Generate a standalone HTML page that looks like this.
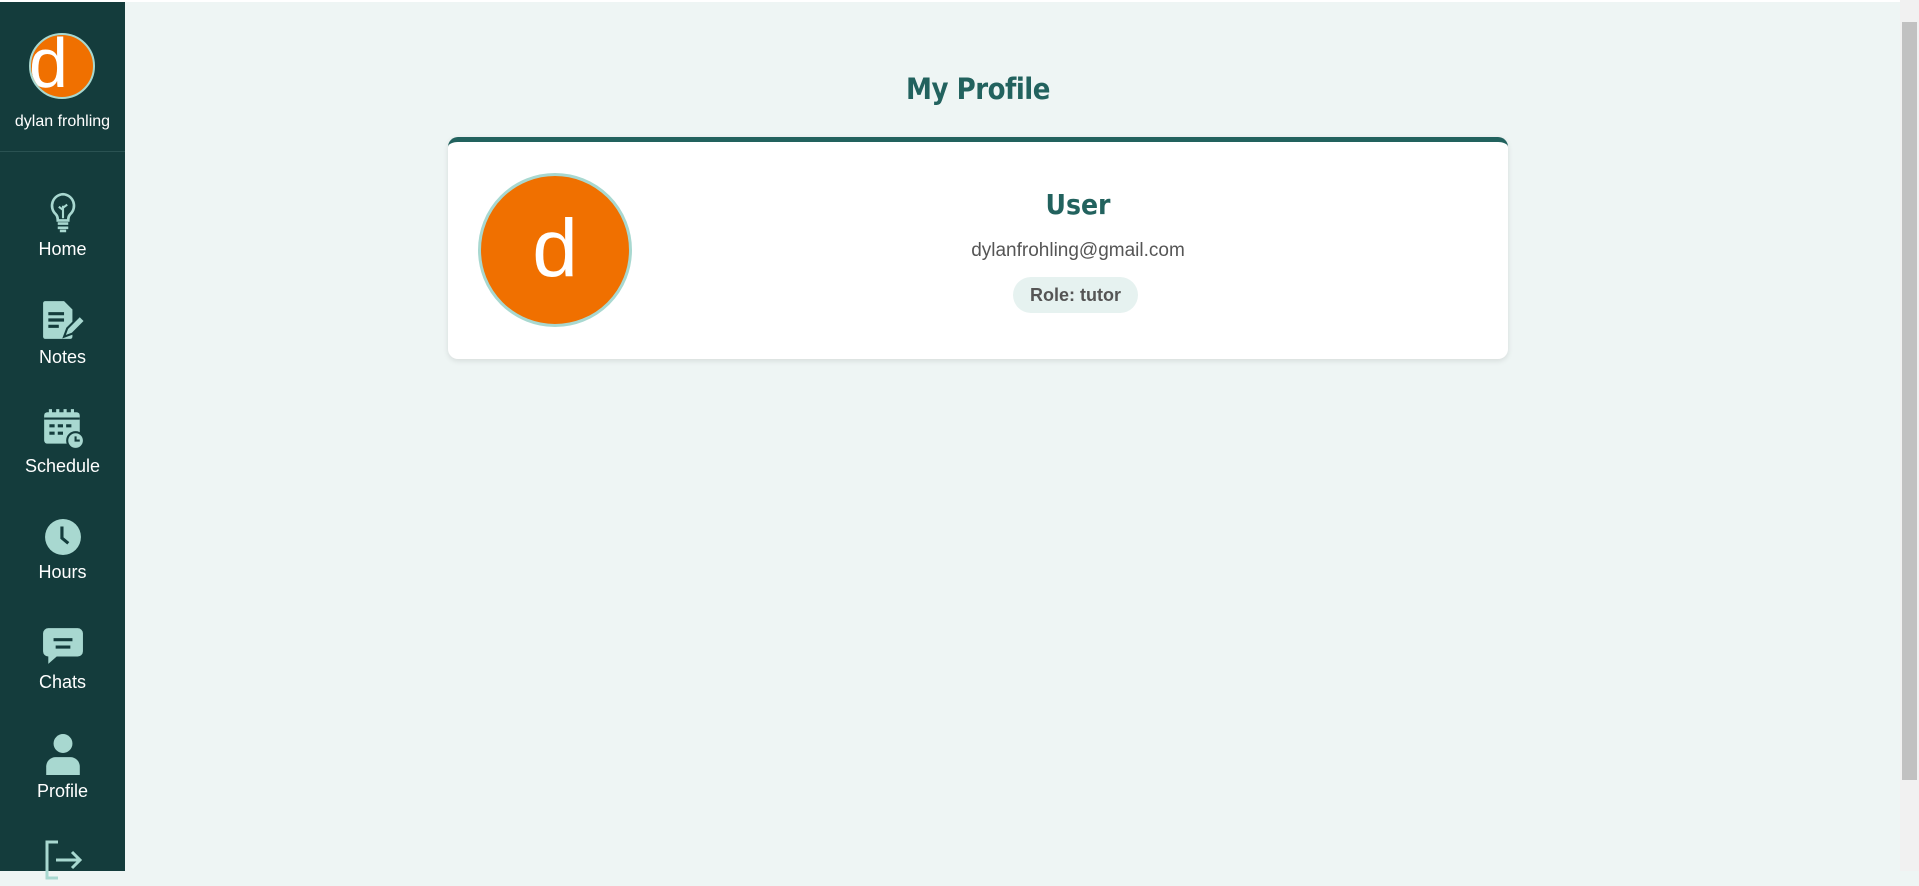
<!DOCTYPE html>
<html><head><meta charset="utf-8"><style>
*{box-sizing:border-box;margin:0;padding:0}
body{width:1919px;height:871px;overflow:hidden;background:#eef5f4;font-family:"Liberation Sans",sans-serif;position:relative}
.top{position:absolute;left:0;top:0;width:1919px;height:2px;background:#fff}
.side{position:absolute;left:0;top:2px;width:125px;height:869px;background:#143c3c;color:#fff}
.av{position:absolute;left:29px;top:31px;width:66px;height:66px;border-radius:50%;background:#f07000;border:2px solid #a8d8d0;overflow:hidden}
.av span{position:absolute;left:-2px;top:-12px;font-size:70px;color:#fff}
.nm{position:absolute;top:111px;width:125px;text-align:center;font-size:16px}
.div{position:absolute;top:149px;left:0;width:125px;height:1px;background:#2a5252}
.it{position:absolute;width:125px;text-align:center;font-size:18px}
.it svg{display:block;margin:0 auto 6px}
.sb{position:absolute;right:0;top:0;width:19px;height:871px;background:#f1f1f1}
.sb div{position:absolute;left:2px;top:22px;width:15px;height:758px;background:#c1c1c1}
h1{position:absolute;left:448px;width:1060px;text-align:center;top:72px;font-size:29px;color:#22625e;font-family:"DejaVu Sans Condensed","Liberation Sans",sans-serif;font-weight:bold;letter-spacing:-0.5px}
.card{position:absolute;left:448px;top:137px;width:1060px;height:222px;background:#fff;border-top:5px solid #22625e;border-radius:10px;box-shadow:0 2px 6px rgba(0,0,0,.1)}
.pav{position:absolute;left:30px;top:31px;width:154px;height:154px;border-radius:50%;background:#f07000;border:3px solid #a8d8d0;color:#fff;font-size:82px;text-align:center;line-height:145px}
.info{position:absolute;left:200px;right:0;text-align:center}
.u{top:46px;font-size:28px;font-weight:bold;color:#22625e;font-family:"DejaVu Sans Condensed","Liberation Sans",sans-serif}
.e{top:98px;font-size:19px;color:#555}
.r{position:absolute;left:565px;top:135px;width:125px;height:36px;border-radius:18px;background:#e6f2f0;color:#555;font-weight:bold;font-size:18px;line-height:36px;text-align:center}
</style></head><body>
<div class="top"></div>
<div class="side">
<div class="av"><span>d</span></div>
<div class="nm">dylan frohling</div>
<div class="div"></div>
<div class="it" style="top:189px"><svg width="32" height="42" viewBox="0 0 30 40" fill="none" stroke="#a8d8d0" stroke-width="2.5"><path d="M15 3a11 11 0 0 0-7 19c2 2 2 4 2 6h10c0-2 0-4 2-6a11 11 0 0 0-7-19z"/><path d="M10 31h10M10 35h10M12 38h6"/><path d="M15 26v-12M15 18l-4-3M15 16l4-3" stroke-width="2"/></svg>Home</div>
<div class="it" style="top:297px"><svg width="44" height="42" viewBox="0 0 42 40"><path d="M4 2h18l8 8v26a2 2 0 0 1-2 2H4a2 2 0 0 1-2-2V4a2 2 0 0 1 2-2z" fill="#a8d8d0"/><path d="M7 14h15M7 20h15M7 26h10" stroke="#143c3c" stroke-width="3"/><path d="M22 36l3-8 12-12 5 5-12 12z" fill="#a8d8d0" stroke="#143c3c" stroke-width="2"/></svg>Notes</div>
<div class="it" style="top:406px"><svg width="44" height="42" viewBox="0 0 42 40"><rect x="3" y="4" width="34" height="30" rx="3" fill="#a8d8d0"/><path d="M9 1v6M16 1v6M23 1v6M30 1v6" stroke="#a8d8d0" stroke-width="3"/><path d="M3 10h34" stroke="#143c3c" stroke-width="2"/><path d="M8 17h5M16 17h5M24 17h5M8 24h5M16 24h5" stroke="#143c3c" stroke-width="3"/><circle cx="33" cy="31" r="8" fill="#a8d8d0" stroke="#143c3c" stroke-width="2"/><path d="M33 27v4h4" stroke="#143c3c" stroke-width="2" fill="none"/></svg>Schedule</div>
<div class="it" style="top:516px"><svg width="38" height="38" viewBox="0 0 36 36"><circle cx="18" cy="18" r="17" fill="#a8d8d0"/><path d="M17 8v11l6 5" stroke="#143c3c" stroke-width="3" fill="none"/></svg>Hours</div>
<div class="it" style="top:624px"><svg width="42" height="40" viewBox="0 0 40 38"><path d="M6 2h28a5 5 0 0 1 5 5v17a5 5 0 0 1-5 5H14l-8 7v-7a5 5 0 0 1-5-5V7a5 5 0 0 1 5-5z" fill="#a8d8d0"/><path d="M11 13h18M13 20h14" stroke="#143c3c" stroke-width="3"/></svg>Chats</div>
<div class="it" style="top:731px"><svg width="38" height="42" viewBox="0 0 36 40"><circle cx="18" cy="10" r="9" fill="#a8d8d0"/><path d="M2 40v-8a9 9 0 0 1 9-9h14a9 9 0 0 1 9 9v8z" fill="#a8d8d0"/></svg>Profile</div>
<div class="it" style="top:838px"><svg width="42" height="40" viewBox="0 0 42 40" fill="none" stroke="#a8d8d0" stroke-width="3"><path d="M16 2H5v36h11"/><path d="M14 20h24M30 12l8 8-8 8"/></svg></div>
</div>
<h1>My Profile</h1>
<div class="card">
<div class="pav">d</div>
<div class="info u">User</div>
<div class="info e">dylanfrohling@gmail.com</div>
<div class="r">Role: tutor</div>
</div>
<div class="sb"><div></div></div>
</body></html>
